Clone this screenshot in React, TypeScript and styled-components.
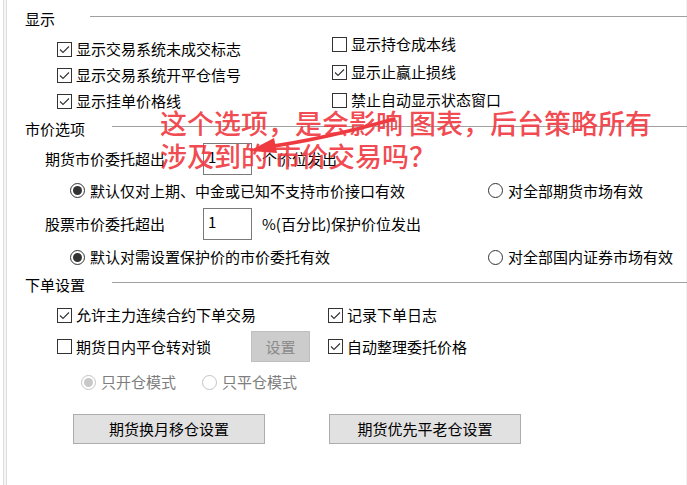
import React from "react";
import styled, { createGlobalStyle } from "styled-components";

const GlobalStyle = createGlobalStyle`
  html, body {
    margin: 0;
    padding: 0;
    background: #fff;
  }
  body {
    font-family: "Noto Sans CJK SC", "Noto Sans", sans-serif;
  }
`;

// Page
const Page = styled.div`
  position: relative;
  width: 687px;
  height: 485px;
  overflow: hidden;
  background: #fff;
  color: #000;
  font-size: 15px;
  line-height: 20px;
  display: flex;
  flex-direction: column;
  box-shadow: inset 3px 0 0 #fff, inset 4px 0 0 #dedede, inset 6px 0 0 #f5f5f5,
    inset 7px 0 0 #dedede, inset -1px 0 0 #f0f0f0;
`;

// Section header
const Header = styled.div<{ $mt: number }>`
  display: flex;
  align-items: center;
  height: 20px;
  margin-top: ${({ $mt }) => $mt}px;
  padding-left: 25px;
`;

const HeaderTitle = styled.span<{ $w: number }>`
  flex: none;
  width: ${({ $w }) => $w}px;
  white-space: nowrap;
`;

const Rule = styled.div`
  flex: 1;
  height: 1px;
  background: #a0a0a0;
  transform: translateY(-3px);
`;

// Display options
const DisplayGrid = styled.div`
  display: grid;
  grid-template-columns: 332px 1fr;
`;

const OptionColumn = styled.div<{ $pt: number; $pl: number; $rowH: number }>`
  display: flex;
  flex-direction: column;
  padding-top: ${({ $pt }) => $pt}px;
  padding-left: ${({ $pl }) => $pl}px;

  & > * {
    height: ${({ $rowH }) => $rowH}px;
  }
`;

// Check boxes and radios
const CheckLabel = styled.label<{ $disabled?: boolean }>`
  display: flex;
  align-items: center;
  gap: 4px;
  white-space: nowrap;
  color: ${({ $disabled }) => ($disabled ? "#7d7d7d" : "#000")};
`;

const Box = styled.span`
  flex: none;
  width: 15px;
  height: 15px;
  box-sizing: border-box;
  border: 1px solid #333;
  background: #fff;
  display: flex;
  align-items: center;
  justify-content: center;
`;

const RadioRing = styled.span<{ $disabled?: boolean }>`
  flex: none;
  width: 15px;
  height: 15px;
  box-sizing: border-box;
  border-radius: 50%;
  border: 1px solid ${({ $disabled }) => ($disabled ? "#c4c4c4" : "#333")};
  background: #fff;
  display: flex;
  align-items: center;
  justify-content: center;
  margin-right: 1px;
`;

const RadioDot = styled.span<{ $disabled?: boolean }>`
  width: 9px;
  height: 9px;
  border-radius: 50%;
  background: ${({ $disabled }) => ($disabled ? "#c8c8c8" : "#333")};
`;

const Check = ({ checked, label }: { checked?: boolean; label: string }) => (
  <CheckLabel>
    <Box>
      {checked && (
        <svg width="11" height="9" viewBox="0 0 11 9">
          <path d="M1 4.5 L4 7.5 L10 1.5" fill="none" stroke="#333" strokeWidth="1.1" />
        </svg>
      )}
    </Box>
    {label}
  </CheckLabel>
);

const Radio = ({ checked, disabled, label }: { checked?: boolean; disabled?: boolean; label: string }) => (
  <CheckLabel $disabled={disabled}>
    <RadioRing $disabled={disabled}>{checked && <RadioDot $disabled={disabled} />}</RadioRing>
    {label}
  </CheckLabel>
);

// Market price rows
const FieldRow = styled.div<{ $mt: number }>`
  display: flex;
  align-items: center;
  height: 32px;
  margin-top: ${({ $mt }) => $mt}px;
  padding-left: 45px;
  white-space: nowrap;
`;

const FieldLabel = styled.span`
  width: 158px;
  flex: none;
`;

const NumberBox = styled.input`
  width: 49px;
  height: 32px;
  box-sizing: border-box;
  border: 1px solid #7a7a7a;
  padding: 0 0 6px 4px;
  margin: 0;
  font: inherit;
  color: #000;
  background: #fff;
  outline: none;
`;

const FieldSuffix = styled.span`
  margin-left: 10px;
`;

const SplitRow = styled.div<{ $split: number; $h: number; $mt: number; $pl: number }>`
  display: grid;
  grid-template-columns: ${({ $split, $pl }) => $split - $pl}px 1fr;
  align-items: center;
  height: ${({ $h }) => $h}px;
  margin-top: ${({ $mt }) => $mt}px;
  padding-left: ${({ $pl }) => $pl}px;
`;

const LeftCell = styled.div`
  display: flex;
  align-items: center;
  justify-content: space-between;
  padding-right: 18px;
`;

// Buttons
const Button = styled.button<{ $w: number; $h: number }>`
  width: ${({ $w }) => $w}px;
  height: ${({ $h }) => $h}px;
  box-sizing: border-box;
  margin: 0;
  padding: 0;
  border: 1px solid #adadad;
  background: #e1e1e1;
  color: #000;
  font: inherit;

  &:disabled {
    background: #cccccc;
    border-color: #bfbfbf;
    color: #8a8a8a;
  }
`;

const ButtonRow = styled.div`
  display: flex;
  gap: 64px;
  margin-top: 19px;
  padding-left: 73px;
`;

// Annotation drawn on top of the dialog
const Note = styled.div`
  position: absolute;
  left: 160px;
  top: 106px;
  font-size: 27px;
  font-weight: 500;
  line-height: 33px;
  color: rgba(240, 58, 66, 0.92);
  white-space: pre;
  pointer-events: none;
`;

const ArrowLayer = styled.svg`
  position: absolute;
  left: 0;
  top: 0;
  pointer-events: none;
`;

export default function App() {
  return (
    <>
      <GlobalStyle />
      <Page>
        <Header $mt={9}>
          <HeaderTitle $w={65}>显示</HeaderTitle>
          <Rule />
        </Header>
        <DisplayGrid>
          <OptionColumn $pt={7} $pl={57} $rowH={26}>
            <Check checked label="显示交易系统未成交标志" />
            <Check checked label="显示交易系统开平仓信号" />
            <Check checked label="显示挂单价格线" />
          </OptionColumn>
          <OptionColumn $pt={1} $pl={0} $rowH={28}>
            <Check label="显示持仓成本线" />
            <Check checked label="显示止赢止损线" />
            <Check label="禁止自动显示状态窗口" />
          </OptionColumn>
        </DisplayGrid>

        <Header $mt={5}>
          <HeaderTitle $w={87}>市价选项</HeaderTitle>
          <Rule />
        </Header>
        <FieldRow $mt={4}>
          <FieldLabel>期货市价委托超出</FieldLabel>
          <NumberBox readOnly defaultValue="1" />
          <FieldSuffix>个价位发出</FieldSuffix>
        </FieldRow>
        <SplitRow $split={488} $h={31} $mt={0} $pl={70}>
          <Radio checked label="默认仅对上期、中金或已知不支持市价接口有效" />
          <Radio label="对全部期货市场有效" />
        </SplitRow>
        <FieldRow $mt={2}>
          <FieldLabel>股票市价委托超出</FieldLabel>
          <NumberBox readOnly defaultValue="1" />
          <FieldSuffix>%(百分比)保护价位发出</FieldSuffix>
        </FieldRow>
        <SplitRow $split={488} $h={34} $mt={0} $pl={70}>
          <Radio checked label="默认对需设置保护价的市价委托有效" />
          <Radio label="对全部国内证券市场有效" />
        </SplitRow>

        <Header $mt={1}>
          <HeaderTitle $w={87}>下单设置</HeaderTitle>
          <Rule />
        </Header>
        <SplitRow $split={328} $h={26} $mt={7} $pl={57}>
          <Check checked label="允许主力连续合约下单交易" />
          <Check checked label="记录下单日志" />
        </SplitRow>
        <SplitRow $split={328} $h={31} $mt={3} $pl={57}>
          <LeftCell>
            <Check label="期货日内平仓转对锁" />
            <Button $w={59} $h={31} disabled>
              设置
            </Button>
          </LeftCell>
          <Check checked label="自动整理委托价格" />
        </SplitRow>
        <SplitRow $split={202} $h={26} $mt={7} $pl={81}>
          <Radio checked disabled label="只开仓模式" />
          <Radio disabled label="只平仓模式" />
        </SplitRow>
        <ButtonRow>
          <Button $w={192} $h={30}>期货换月移仓设置</Button>
          <Button $w={192} $h={30}>期货优先平老仓设置</Button>
        </ButtonRow>

        <ArrowLayer width="687" height="485" viewBox="0 0 687 485">
          <path
            d="M266 147 Q320 140 394 119"
            fill="none"
            stroke="#ee3a3f"
            strokeWidth="3.5"
            strokeLinecap="round"
          />
          <polygon points="249,151 274,138 277,153" fill="#ee3a3f" />
        </ArrowLayer>
        <Note>{"这个选项，是会影响 图表，后台策略所有\n涉及到的 市价交易吗？"}</Note>
      </Page>
    </>
  );
}
